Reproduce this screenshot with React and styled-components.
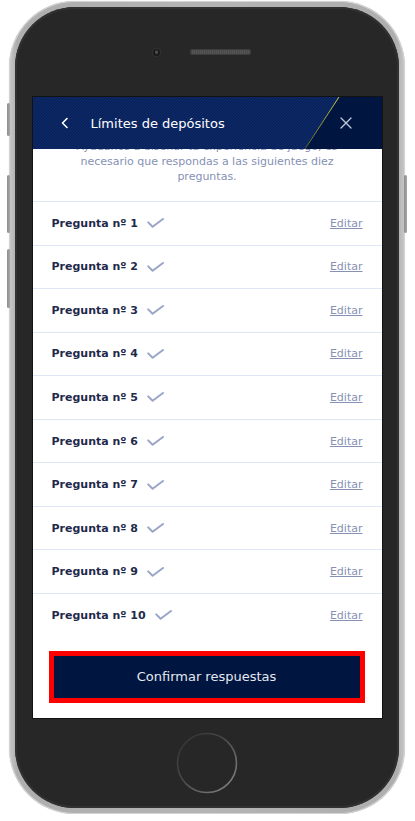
import styled, { createGlobalStyle } from 'styled-components';

const GlobalStyle = createGlobalStyle`
  html, body {
    margin: 0;
    padding: 0;
    background: #ffffff;
  }
  body {
    font-family: "DejaVu Sans", Verdana, sans-serif;
  }
`;

const colors = {
  navy: '#00153f',
  navyText: '#1f2a4b',
  muted: '#8691b4',
  check: '#9aa5c7',
  divider: '#dfe7f6',
  white: '#ffffff',
};

const questions = Array.from({ length: 10 }, (_, i) => i + 1);

const Page = styled.div`
  padding: 1px 0 0 9px;
`;

const Frame = styled.div`
  position: relative;
  width: 396px;
  box-sizing: border-box;
  padding: 6px;
  border-radius: 66px;
  background: linear-gradient(90deg, #c9c9c9 0%, #aeaeae 2%, #b4b4b4 50%, #aeaeae 98%, #c9c9c9 100%);
  box-shadow: inset 0 0 0 1px #d4d4d4, 0 0 1px rgba(0, 0, 0, 0.2);
`;

const SideKey = styled.span`
  position: absolute;
  top: ${(p) => p.$top}px;
  ${(p) => (p.$right ? 'right: -2px;' : 'left: -2px;')}
  width: 3px;
  height: ${(p) => p.$h}px;
  border-radius: 2px;
  background: linear-gradient(90deg, #8e8e8e, #a6a6a6);
`;

const Body = styled.div`
  display: flex;
  flex-direction: column;
  align-items: center;
  border-radius: 60px;
  background: #272727;
  box-shadow: inset 0 0 0 2px #313131;
`;

const TopBezel = styled.div`
  height: 90px;
  width: 100%;
  display: flex;
  align-items: center;
  justify-content: center;
  gap: 30px;
  padding-right: 10px;
  box-sizing: border-box;
`;

const Camera = styled.span`
  width: 7px;
  height: 7px;
  border-radius: 50%;
  background: radial-gradient(circle at 50% 45%, #4a4a4a 0 1.5px, #1a1a1a 2px);
  box-shadow: 0 0 0 1px #333;
`;

const Speaker = styled.span`
  width: 61px;
  height: 6px;
  border-radius: 3px;
  background: repeating-linear-gradient(90deg, #555 0 1px, #4a4a4a 1px 2px);
  box-shadow: inset 0 0 0 1px #3c3c3c;
`;

const BottomBezel = styled.div`
  height: 90px;
  display: flex;
  align-items: center;
  justify-content: center;
`;

const Screen = styled.div`
  width: 349px;
  height: 621px;
  display: flex;
  flex-direction: column;
  background: ${colors.white};
  overflow: hidden;
  box-shadow: 0 0 0 1px #121212;
`;

const Header = styled.header`
  position: relative;
  z-index: 1;
  flex-shrink: 0;
  height: 52px;
  display: flex;
  align-items: center;
  padding: 0 30px 0 27px;
  background: ${colors.navy};
  color: ${colors.white};
`;

const HeaderArt = styled.svg`
  position: absolute;
  inset: 0;
  width: 100%;
  height: 100%;
  z-index: -1;
`;

const IconButton = styled.button`
  border: none;
  background: transparent;
  padding: 0;
  display: flex;
  color: ${(p) => p.$color || colors.white};
  cursor: pointer;
`;

const Title = styled.h1`
  margin: 0 0 0 21px;
  font-size: 13px;
  font-weight: normal;
  color: ${colors.white};
  flex: 1;
`;

const Content = styled.div`
  flex: 1;
  overflow: hidden;
`;

const Intro = styled.p`
  margin: -10.5px 0 0;
  padding: 0 30px 17.5px;
  font-size: 11px;
  line-height: 15px;
  text-align: center;
  color: ${colors.muted};
`;

const List = styled.ul`
  margin: 0;
  padding: 0;
  list-style: none;
`;

const Row = styled.li`
  height: 43.56px;
  box-sizing: border-box;
  display: flex;
  align-items: center;
  padding: 0 19px;
  border-top: 1px solid ${colors.divider};
`;

const Label = styled.span`
  font-size: 11px;
  font-weight: bold;
  color: ${colors.navyText};
`;

const Check = styled.svg`
  margin-left: 9px;
  width: 17px;
  height: 10px;
`;

const EditLink = styled.a`
  margin-left: auto;
  font-size: 11px;
  color: ${colors.muted};
  text-decoration: underline;
  cursor: pointer;
`;

const Footer = styled.div`
  padding: 19.4px 22px 0 21px;
`;

const ConfirmButton = styled.button`
  width: 100%;
  height: 42px;
  border: none;
  background: ${colors.navy};
  color: #e4e8f1;
  font-family: "DejaVu Sans", Verdana, sans-serif;
  font-size: 13px;
  outline: 5px solid #ff0000;
  cursor: pointer;
`;

const HomeButton = styled.svg`
  width: 64px;
  height: 64px;
`;

function CheckMark() {
  return (
    <Check viewBox="0 0 17 10" fill="none">
      <path
        d="M1.2 4.4 L5.6 8.8 L16 1"
        stroke={colors.check}
        strokeWidth="2"
        strokeLinecap="round"
        strokeLinejoin="round"
      />
    </Check>
  );
}

function HeaderBackground() {
  return (
    <HeaderArt viewBox="0 0 349 52" preserveAspectRatio="none">
      <defs>
        <pattern id="weave" width="3" height="3" patternUnits="userSpaceOnUse">
          <rect width="3" height="3" fill="#09225c" />
          <path d="M0 3 L3 0" stroke="#113070" strokeWidth="0.7" />
        </pattern>
        <linearGradient id="streak" x1="0" y1="0" x2="0" y2="1">
          <stop offset="0" stopColor="#e6e33a" />
          <stop offset="1" stopColor="#5f6a2a" />
        </linearGradient>
      </defs>
      <rect width="349" height="52" fill="url(#weave)" />
      <polygon points="306,0 349,0 349,52 272,52" fill={colors.navy} />
      <line x1="306" y1="0" x2="272" y2="52" stroke="url(#streak)" strokeWidth="0.9" />
    </HeaderArt>
  );
}

export default function App() {
  return (
    <Page>
      <GlobalStyle />
      <Frame>
        <SideKey $top={102} $h={33} />
        <SideKey $top={174} $h={58} />
        <SideKey $top={248} $h={59} />
        <SideKey $right $top={174} $h={58} />
        <Body>
          <TopBezel>
            <Camera />
            <Speaker />
          </TopBezel>
          <Screen>
            <Header>
              <HeaderBackground />
              <IconButton type="button" aria-label="Volver">
                <svg width="10" height="12" viewBox="0 0 10 12" fill="none">
                  <path d="M7 1.5 L2.5 6 L7 10.5" stroke="currentColor" strokeWidth="1.6" strokeLinecap="round" strokeLinejoin="round" />
                </svg>
              </IconButton>
              <Title>Límites de depósitos</Title>
              <IconButton type="button" aria-label="Cerrar" $color="#c3cadc">
                <svg width="12" height="12" viewBox="0 0 12 12" fill="none">
                  <path d="M1 1 L11 11 M11 1 L1 11" stroke="currentColor" strokeWidth="1.3" strokeLinecap="round" />
                </svg>
              </IconButton>
            </Header>
            <Content>
              <Intro>
                Ayúdanos a diseñar tu experiencia de juego, es necesario que respondas a las siguientes diez
                preguntas.
              </Intro>
              <List>
                {questions.map((n) => (
                  <Row key={n}>
                    <Label>Pregunta nº {n}</Label>
                    <CheckMark />
                    <EditLink>Editar</EditLink>
                  </Row>
                ))}
              </List>
              <Footer>
                <ConfirmButton type="button">Confirmar respuestas</ConfirmButton>
              </Footer>
            </Content>
          </Screen>
          <BottomBezel>
            <HomeButton viewBox="0 0 64 64" fill="none">
              <defs>
                <linearGradient id="ring" x1="0" y1="0" x2="1" y2="1">
                  <stop offset="0" stopColor="#2e2e2e" />
                  <stop offset="0.45" stopColor="#4a4a4a" />
                  <stop offset="1" stopColor="#8a8a8a" />
                </linearGradient>
              </defs>
              <circle cx="32" cy="32" r="29.5" stroke="url(#ring)" strokeWidth="1.6" />
            </HomeButton>
          </BottomBezel>
        </Body>
      </Frame>
    </Page>
  );
}
